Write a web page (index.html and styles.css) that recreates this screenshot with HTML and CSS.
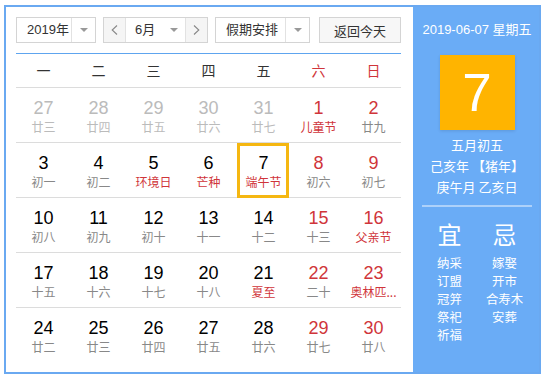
FILE: index.html
```html
<!DOCTYPE html>
<html lang="zh-CN">
<head>
<meta charset="utf-8">
<title>万年历</title>
<link rel="stylesheet" href="styles.css">
</head>
<body>
<div class="cal">
  <div class="main">
    <div class="toolbar">
      <div class="sel sel-year">
        <span class="sel-text">2019年</span>
        <span class="sel-arrow"><i class="tri"></i></span>
      </div>
      <div class="month">
        <span class="nav nav-prev"><svg width="7" height="10" viewBox="0 0 7 10"><polyline points="6,0.5 1.2,5 6,9.5" fill="none" stroke="#888" stroke-width="1.1"/></svg></span>
        <span class="month-text">6月</span>
        <span class="month-arrow"><i class="tri"></i></span>
        <span class="nav nav-next"><svg width="7" height="10" viewBox="0 0 7 10"><polyline points="1,0.5 5.8,5 1,9.5" fill="none" stroke="#888" stroke-width="1.1"/></svg></span>
      </div>
      <div class="sel sel-hol">
        <span class="sel-text">假期安排</span>
        <span class="sel-arrow"><i class="tri"></i></span>
      </div>
      <div class="today-btn">返回今天</div>
    </div>

    <div class="week">
      <div>一</div><div>二</div><div>三</div><div>四</div><div>五</div><div class="red">六</div><div class="red">日</div>
    </div>

    <div class="grid">
      <div class="cell other"><b>27</b><span>廿三</span></div>
      <div class="cell other"><b>28</b><span>廿四</span></div>
      <div class="cell other"><b>29</b><span>廿五</span></div>
      <div class="cell other"><b>30</b><span>廿六</span></div>
      <div class="cell other"><b>31</b><span>廿七</span></div>
      <div class="cell wk"><b>1</b><span class="fest">儿童节</span></div>
      <div class="cell wk"><b>2</b><span>廿九</span></div>

      <div class="cell"><b>3</b><span>初一</span></div>
      <div class="cell"><b>4</b><span>初二</span></div>
      <div class="cell"><b>5</b><span class="fest">环境日</span></div>
      <div class="cell"><b>6</b><span class="fest">芒种</span></div>
      <div class="cell selected"><b>7</b><span class="fest">端午节</span></div>
      <div class="cell wk"><b>8</b><span>初六</span></div>
      <div class="cell wk"><b>9</b><span>初七</span></div>

      <div class="cell"><b>10</b><span>初八</span></div>
      <div class="cell"><b>11</b><span>初九</span></div>
      <div class="cell"><b>12</b><span>初十</span></div>
      <div class="cell"><b>13</b><span>十一</span></div>
      <div class="cell"><b>14</b><span>十二</span></div>
      <div class="cell wk"><b>15</b><span>十三</span></div>
      <div class="cell wk"><b>16</b><span class="fest">父亲节</span></div>

      <div class="cell"><b>17</b><span>十五</span></div>
      <div class="cell"><b>18</b><span>十六</span></div>
      <div class="cell"><b>19</b><span>十七</span></div>
      <div class="cell"><b>20</b><span>十八</span></div>
      <div class="cell"><b>21</b><span class="fest">夏至</span></div>
      <div class="cell wk"><b>22</b><span>二十</span></div>
      <div class="cell wk"><b>23</b><span class="fest">奥林匹...</span></div>

      <div class="cell last"><b>24</b><span>廿二</span></div>
      <div class="cell last"><b>25</b><span>廿三</span></div>
      <div class="cell last"><b>26</b><span>廿四</span></div>
      <div class="cell last"><b>27</b><span>廿五</span></div>
      <div class="cell last"><b>28</b><span>廿六</span></div>
      <div class="cell last wk"><b>29</b><span>廿七</span></div>
      <div class="cell last wk"><b>30</b><span>廿八</span></div>
    </div>
  </div>

  <div class="side">
    <div class="side-date">2019-06-07 星期五</div>
    <div class="side-day">7</div>
    <div class="side-lunar">
      <div>五月初五</div>
      <div>己亥年 【猪年】</div>
      <div>庚午月 乙亥日</div>
    </div>
    <div class="side-rule"></div>
    <div class="yj">
      <div class="yj-col">
        <div class="yj-title">宜</div>
        <div>纳采</div><div>订盟</div><div>冠笄</div><div>祭祀</div><div>祈福</div>
      </div>
      <div class="yj-col">
        <div class="yj-title">忌</div>
        <div>嫁娶</div><div>开市</div><div>合寿木</div><div>安葬</div>
      </div>
    </div>
  </div>
</div>
</body>
</html>
```

FILE: styles.css
```css
* { box-sizing: border-box; }

body {
  margin: 0;
  background: #fff;
  font-family: "Liberation Sans", "Noto Sans CJK SC", Arial, sans-serif;
  color: #000;
}

.cal {
  margin: 5px 0 0 4px;
  width: 537px;
  height: 369px;
  border: 2px solid #6aa9f1;
  display: flex;
}

.main {
  width: 407px;
  padding: 10px 12px 0 10px;
}

/* toolbar */
.toolbar {
  display: flex;
  height: 26px;
  font-size: 13px;
  color: #333;
}

.sel, .month, .today-btn {
  border: 1px solid #d4d4d4;
  height: 26px;
  display: flex;
  align-items: center;
  background: #fff;
}

.sel-year { width: 80px; }
.sel-hol { width: 95px; margin-left: 7px; }
.month { width: 105px; margin-left: 7px; }

.sel-text {
  flex: 1;
  padding-left: 10px;
  line-height: 24px;
  font-family: "Liberation Sans", "Noto Sans CJK SC", sans-serif;
}

.sel-arrow {
  width: 24px;
  height: 24px;
  border-left: 1px solid #e2e2e2;
  display: flex;
  align-items: center;
  justify-content: center;
}

.tri {
  display: block;
  width: 0;
  height: 0;
  border-left: 4px solid transparent;
  border-right: 4px solid transparent;
  border-top: 4px solid #999;
}

.nav {
  width: 22px;
  height: 24px;
  background: #f5f5f5;
  display: flex;
  align-items: center;
  justify-content: center;
}
.nav-prev { border-right: 1px solid #e2e2e2; }
.nav-next { border-left: 1px solid #e2e2e2; }

.month-text {
  flex: 1;
  padding-left: 9px;
  line-height: 24px;
}
.month-arrow {
  width: 22px;
  display: flex;
  justify-content: center;
}

.today-btn {
  width: 82px;
  margin-left: 9px;
  justify-content: center;
  background: #f7f7f7;
  font-family: "Noto Sans CJK SC", sans-serif;
}

/* week header */
.week {
  margin-top: 10px;
  border-top: 1px solid #5ea5ef;
  border-bottom: 1px solid #dcdcdc;
  height: 35px;
  display: grid;
  grid-template-columns: repeat(7, 55px);
  font-family: "Noto Sans CJK SC", sans-serif;
  font-size: 14px;
  color: #333;
}
.week div {
  text-align: center;
  line-height: 33px;
}
.week .red { color: #d0353a; }

/* grid */
.grid {
  display: grid;
  grid-template-columns: repeat(7, 55px);
}

.cell {
  position: relative;
  height: 55px;
  border-bottom: 1px solid #dcdcdc;
  text-align: center;
  padding-top: 10px;
}
.cell.last { border-bottom: none; }

.cell b {
  display: block;
  font-weight: normal;
  font-size: 18px;
  line-height: 20px;
  color: #000;
}

.cell span {
  display: block;
  margin: 1px auto 0;
  width: 53px;
  font-family: "Noto Sans CJK SC", sans-serif;
  font-size: 12px;
  line-height: 16px;
  color: #888;
  white-space: nowrap;
}

.cell.wk b { color: #d0353a; }
.cell span.fest { color: #d0353a; }
.cell.other b { color: #bbb; }
.cell.other span { color: #bbb; }

.cell.selected::after {
  content: "";
  position: absolute;
  left: 1px;
  right: 2px;
  top: 0;
  bottom: -1px;
  border: 3px solid #f5b711;
}

/* side panel */
.side {
  width: 126px;
  background: #6aacf6;
  color: #fff;
  padding: 13px 7px 0 9px;
  font-family: "Liberation Sans", "Noto Sans CJK SC", sans-serif;
  text-align: center;
}

.side-date {
  font-size: 13px;
  line-height: 20px;
  white-space: nowrap;
}

.side-day {
  width: 75px;
  height: 75px;
  margin: 15px auto 0;
  background: #ffb400;
  box-shadow: 0 1px 3px rgba(0, 0, 0, 0.12);
  font-size: 53px;
  line-height: 75px;
}

.side-lunar {
  margin-top: 4px;
  font-family: "Noto Sans CJK SC", sans-serif;
  font-size: 13px;
  line-height: 21px;
  white-space: nowrap;
}

.side-rule {
  margin-top: 8px;
  height: 2px;
  background: rgba(255, 255, 255, 0.45);
}

.yj {
  display: flex;
  margin-top: 12px;
  font-family: "Noto Sans CJK SC", sans-serif;
  font-size: 12.4px;
  line-height: 18px;
}

.yj-col {
  flex: 1;
}

.yj-title {
  font-size: 24px;
  line-height: 30px;
  margin-bottom: 5px;
}
```
